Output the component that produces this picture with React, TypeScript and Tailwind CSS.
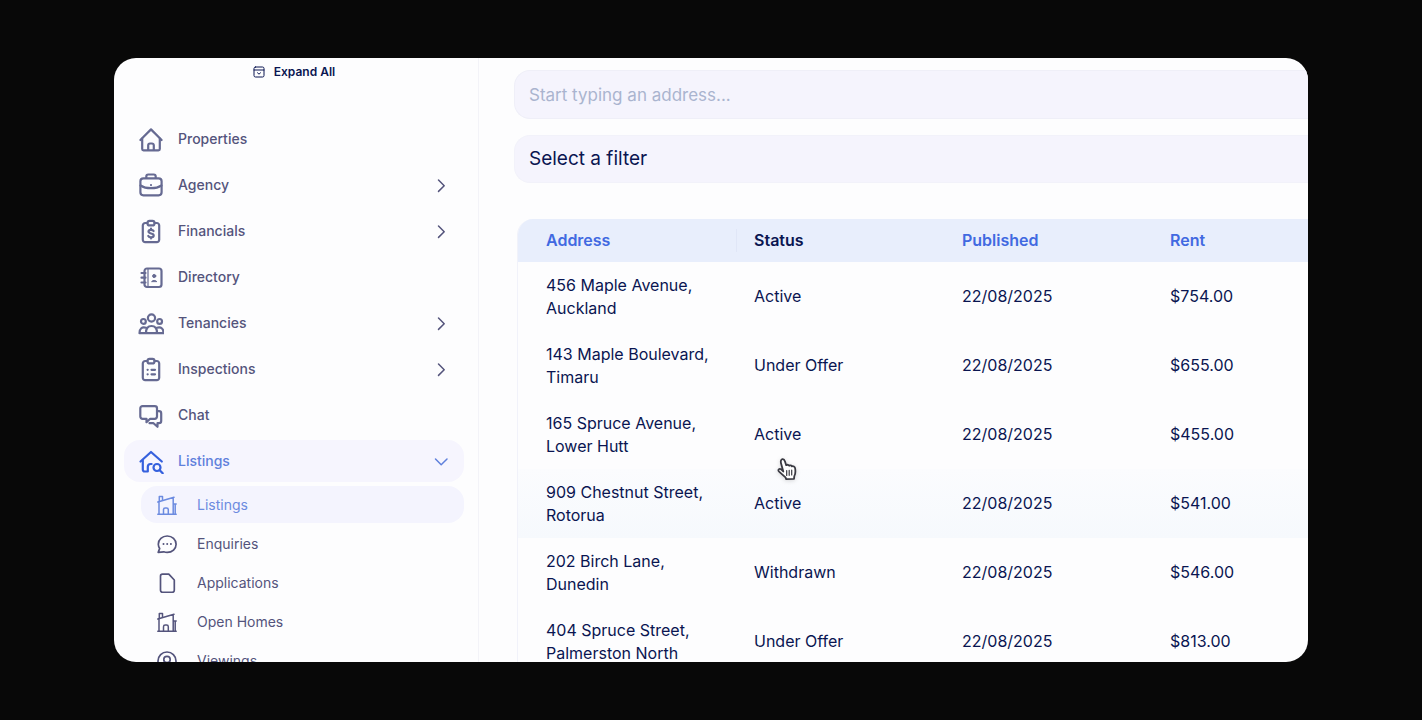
import React, { useState } from 'react';
import clsx from 'clsx';

interface IconProps {
  className?: string;
}

const Icon: React.FC<IconProps & { children: React.ReactNode }> = ({ className, children }) => (
  <svg
    viewBox="0 0 26 26"
    fill="none"
    stroke="currentColor"
    strokeWidth={2.2}
    strokeLinecap="round"
    strokeLinejoin="round"
    className={clsx('size-[26px] shrink-0', className)}
    aria-hidden="true"
  >
    {children}
  </svg>
);

const SmallIcon: React.FC<IconProps & { children: React.ReactNode }> = ({ className, children }) => (
  <svg
    viewBox="0 0 20 20"
    fill="none"
    stroke="currentColor"
    strokeWidth={1.7}
    strokeLinecap="round"
    strokeLinejoin="round"
    className={clsx('size-5 shrink-0', className)}
    aria-hidden="true"
  >
    {children}
  </svg>
);

const HomeIcon = () => (
  <Icon className="text-[#666a92]">
    <path d="M2.4 14 13 3.4 23.6 14" />
    <path d="M4.2 12.500v10.500a1.300 1.300 0 0 0 1.300 1.300h15a1.300 1.300 0 0 0 1.300-1.300V12.500" />
    <path d="M10.200 24v-4.700a1.800 1.800 0 0 1 1.800-1.800h2a1.800 1.800 0 0 1 1.800 1.800V24" />
  </Icon>
);

const BriefcaseIcon = () => (
  <Icon className="text-[#666a92]">
    <rect x="2.4" y="6.300" width="21.200" height="17" rx="3" />
    <path d="M8.300 6V4.500a2 2 0 0 1 2-2h5.400a2 2 0 0 1 2 2V6" />
    <path d="M2.500 13.500c5.500 3.600 15.500 3.600 21 0" />
    <path d="M13 13v.1" />
  </Icon>
);

const ClipboardFrame = () => (
  <>
    <path d="M9.500 5H7.200A2.400 2.400 0 0 0 4.800 7.400v14.400a2.400 2.400 0 0 0 2.400 2.400h11.600a2.400 2.400 0 0 0 2.400-2.400V7.400A2.400 2.400 0 0 0 18.800 5h-2.300" />
    <rect x="9.500" y="2.800" width="7" height="4.600" rx="2" />
  </>
);

const FinancialsIcon = () => (
  <Icon className="text-[#666a92]">
    <ClipboardFrame />
    <path d="M15.600 13c-.4-.8-1.300-1.200-2.600-1.200-1.500 0-2.500.7-2.500 1.800 0 2.700 5.200 1.100 5.200 3.800 0 1.200-1.100 1.900-2.700 1.900-1.400 0-2.300-.5-2.700-1.300M13 10.600v1M13 19.500v1" />
  </Icon>
);

const DirectoryIcon = () => (
  <Icon className="text-[#666a92]">
    <rect x="6.500" y="4.500" width="17" height="18.500" rx="2.500" />
    <path d="M10 5v17.500" strokeWidth={1.200} />
    <path d="M3.500 9h4M3.500 13.700h4M3.500 18.500h4" />
    <circle cx="16.200" cy="12" r="1.600" fill="currentColor" strokeWidth={1} />
    <path d="M13.800 17.300c.8-1.200 4-1.200 4.800 0z" fill="currentColor" strokeWidth={1} />
  </Icon>
);

const TenanciesIcon = () => (
  <Icon className="text-[#666a92]">
    <circle cx="13.500" cy="8" r="3.600" />
    <circle cx="5.400" cy="11.400" r="2.400" />
    <circle cx="21.600" cy="11.400" r="2.400" />
    <path d="M8 23c0-4.800 1.800-7 5.500-7s5.500 2.200 5.500 7" />
    <path d="M8 17.800c-4-1.200-6.500.6-6.500 5.400h24c0-4.800-2.500-6.600-6.500-5.400" />
  </Icon>
);

const InspectionsIcon = () => (
  <Icon className="text-[#666a92]">
    <ClipboardFrame />
    <path d="M9.600 13.800h.1M13.500 13.800H17M9.600 18.300h.1M13.500 18.300H17" />
  </Icon>
);

const ChatIcon = () => (
  <Icon className="text-[#666a92]">
    <path d="M4.500 4.200h12.300A2.200 2.200 0 0 1 19 6.400v8.200a2.200 2.200 0 0 1-2.200 2.200h-4.600l-3.700 3.400v-3.400h-4a2.200 2.200 0 0 1-2.200-2.200V6.400a2.200 2.200 0 0 1 2.200-2.200z" />
    <path d="M19.300 9.200H21a2.200 2.200 0 0 1 2.200 2.200V19a2.200 2.200 0 0 1-2.200 2.200h-1.500v3.600L15.500 21.200h-4" />
  </Icon>
);

const HouseSearchIcon = () => (
  <Icon className="text-[#3560dd]">
    <path d="M2.500 13.500 13 4l10.800 9.500" />
    <path d="M4.800 12.500v9a2 2 0 0 0 2 2h3v-4.700a2.800 2.800 0 0 1 2.800-2.800h1" />
    <circle cx="19" cy="19.500" r="3.500" />
    <path d="m21.700 22.300 3 3" />
  </Icon>
);

const BuildingIcon = () => (
  <SmallIcon>
    <g strokeWidth={1.500}>
      <path d="M.8 19.200h18.400M2 19V6.800M.8 7 17 2.200M16.200 2.500V19M16.200 9h3M18.200 9v10" />
      <path d="M2.300 6.300V1.500h3.200v3.800" />
      <path d="M6.500 19v-4.300A1.700 1.700 0 0 1 8.200 13h1.400a1.700 1.700 0 0 1 1.700 1.700V19" />
    </g>
  </SmallIcon>
);

const EnquiriesIcon = () => (
  <SmallIcon>
    <path d="M10.200 2c5 0 8.900 3.500 8.900 8.200s-3.900 8.200-8.900 8.200c-1.200 0-2.400-.2-3.400-.6l-5.600.6 1.500-4a7.600 7.600 0 0 1-1.400-4.200C1.300 5.500 5.200 2 10.200 2z" />
    <path d="M6.500 10h.01M10.200 10h.01M13.900 10h.01" strokeWidth={2} />
  </SmallIcon>
);

const FileIcon = () => (
  <SmallIcon>
    <path d="M5.500 1.200h6.300L17.300 7v10.300a2 2 0 0 1-2 2H5.500a2 2 0 0 1-2-2V3.200a2 2 0 0 1 2-2z" />
  </SmallIcon>
);

const ViewingsIcon = () => (
  <SmallIcon>
    <circle cx="10" cy="10" r="9" />
    <circle cx="10" cy="8.500" r="3.200" />
    <path d="M4.500 16.800c.8-3 2.800-4 5.500-4s4.700 1 5.500 4" />
  </SmallIcon>
);

const Chevron: React.FC<{ open: boolean }> = ({ open }) => (
  <svg
    viewBox="0 0 16 16"
    fill="none"
    stroke="currentColor"
    strokeWidth={1.500}
    strokeLinecap="round"
    strokeLinejoin="round"
    className="ml-auto size-4 shrink-0"
    aria-hidden="true"
  >
    <path d={open ? 'm2.500 6 5.700 5.700L14 6' : 'm5.500 3 5.700 5.700-5.700 5.700'} />
  </svg>
);

const navItems = [
  { label: 'Properties', icon: HomeIcon, expandable: false },
  { label: 'Agency', icon: BriefcaseIcon, expandable: true },
  { label: 'Financials', icon: FinancialsIcon, expandable: true },
  { label: 'Directory', icon: DirectoryIcon, expandable: false },
  { label: 'Tenancies', icon: TenanciesIcon, expandable: true },
  { label: 'Inspections', icon: InspectionsIcon, expandable: true },
  { label: 'Chat', icon: ChatIcon, expandable: false },
];

const listingItems = [
  { label: 'Listings', icon: BuildingIcon },
  { label: 'Enquiries', icon: EnquiriesIcon },
  { label: 'Applications', icon: FileIcon },
  { label: 'Open Homes', icon: BuildingIcon },
  { label: 'Viewings', icon: ViewingsIcon },
];

const listings = [
  { street: '456 Maple Avenue,', city: 'Auckland', status: 'Active', published: '22/08/2025', rent: '$754.00' },
  { street: '143 Maple Boulevard,', city: 'Timaru', status: 'Under Offer', published: '22/08/2025', rent: '$655.00' },
  { street: '165 Spruce Avenue,', city: 'Lower Hutt', status: 'Active', published: '22/08/2025', rent: '$455.00' },
  { street: '909 Chestnut Street,', city: 'Rotorua', status: 'Active', published: '22/08/2025', rent: '$541.00' },
  { street: '202 Birch Lane,', city: 'Dunedin', status: 'Withdrawn', published: '22/08/2025', rent: '$546.00' },
  { street: '404 Spruce Street,', city: 'Palmerston North', status: 'Under Offer', published: '22/08/2025', rent: '$813.00' },
];

const columns = ['Address', 'Status', 'Published', 'Rent'];

const Sidebar: React.FC = () => {
  const [open, setOpen] = useState(true);
  const rowClass = 'flex h-[42px] w-full shrink-0 items-center gap-[14px] rounded-2xl pl-[14px] pr-[15px] text-left';

  return (
    <aside className="flex w-[365px] shrink-0 flex-col border-r border-[#f3f3f8] pl-[10px] pr-[14px] text-sm font-medium text-[#54547c]">
      <button className="mx-auto flex h-7 shrink-0 items-center gap-[9px] text-xs font-semibold text-[#0a1551]">
        <svg viewBox="0 0 12 12" fill="none" stroke="currentColor" strokeLinecap="round" className="size-3" aria-hidden="true">
          <rect x="1" y="1" width="10" height="10" rx="1.500" />
          <path d="M1 4h10M4.500 6.800 6 8.200l1.500-1.400" />
        </svg>
        Expand All
      </button>

      <nav className="mt-8 flex flex-col gap-1">
        {navItems.map(({ label, icon: ItemIcon, expandable }) =>
          expandable ? (
            <button key={label} className={rowClass}>
              <ItemIcon />
              <span>{label}</span>
              <Chevron open={false} />
            </button>
          ) : (
            <a key={label} href="#" className={rowClass}>
              <ItemIcon />
              <span>{label}</span>
            </a>
          )
        )}

        <button
          onClick={() => setOpen(!open)}
          aria-expanded={open}
          className={clsx(rowClass, 'bg-[#f6f5fe] text-[#5f80dc]')}
        >
          <HouseSearchIcon />
          <span>Listings</span>
          <Chevron open={open} />
        </button>

        {open && (
          <div className="flex flex-col gap-[2px] pl-[17px] font-normal">
            {listingItems.map(({ label, icon: ItemIcon }, index) => (
              <a
                key={label}
                href="#"
                className={clsx(
                  'flex h-[37px] shrink-0 items-center gap-5 rounded-2xl pl-4',
                  index === 0 && 'bg-[#f4f4fe] text-[#6c8be0]'
                )}
              >
                <ItemIcon />
                <span>{label}</span>
              </a>
            ))}
          </div>
        )}
      </nav>
    </aside>
  );
};

const ListingsTable: React.FC = () => (
  <div className="ml-[3px] mt-9 overflow-hidden rounded-tl-2xl border-l border-[#f1f2fa]">
    <table className="w-full table-fixed text-left text-base leading-[23px] text-[#0a1551]">
      <thead>
        <tr className="h-[43px] bg-[#e8eefc]">
          {columns.map((column) => (
            <th key={column} className="w-[208px] p-0 last:w-auto">
              <button
                className={clsx(
                  'block w-full pl-7 text-left font-semibold',
                  column === 'Status'
                    ? 'bg-[linear-gradient(#e0e6f7,#e0e6f7)] bg-[length:1px_100%] bg-[position:10px_0] bg-no-repeat text-[#0a1551]'
                    : 'text-[#4169e1]'
                )}
              >
                {column}
              </button>
            </th>
          ))}
        </tr>
      </thead>
      <tbody>
        {listings.map((listing, index) => (
          <tr key={listing.street} className={clsx('h-[69px]', index === 3 && 'bg-linear-to-b from-[#fbfcfe] to-[#f6f9fd]')}>
            <td className="p-0 pl-7">
              {listing.street}
              <br />
              {listing.city}
            </td>
            <td className="p-0 pl-7">{listing.status}</td>
            <td className="p-0 pl-7">{listing.published}</td>
            <td className="p-0 pl-7">{listing.rent}</td>
          </tr>
        ))}
      </tbody>
    </table>
  </div>
);

const HandCursor: React.FC<IconProps> = ({ className }) => (
  <svg viewBox="0 0 20 24" className={className} aria-hidden="true">
    <path
      d="M6.300 14.500 4 6.200C3.500 4.300 4 2.400 5.400 2.100c1.300-.3 2.100.7 2.600 2.300l1.200 3.800c1-.8 2.500-.5 3 .5 1-.6 2.300-.3 2.700.6 1.500-.4 2.900.2 3.200 1.900.5 3 .8 5.200-.8 7.900l-.3 2.700-7.800.4-.7-1.800c-2-1.700-4.300-3.800-6.400-5.700-1.300-1.300-.7-3.100 1-2.900 1.100.1 2.100 1.300 3.200 2.700z"
      fill="white"
      stroke="#3a3a42"
      strokeWidth={1.800}
      strokeLinejoin="round"
    />
    <path d="M9.700 13.500v5M12.200 13.300v5M14.700 13v5" stroke="#3a3a42" strokeWidth={1.200} strokeLinecap="round" />
  </svg>
);

const App: React.FC = () => {
  const [address, setAddress] = useState('');

  return (
    <div className="h-screen bg-[#080808] px-[114px] py-[58px] font-['Inter',sans-serif]">
      <div className="relative flex h-full overflow-hidden rounded-[22px] bg-[#fdfdfe]">
        <Sidebar />

        <main className="min-w-0 flex-1 pl-[35px] pt-3">
          <input
            type="text"
            aria-label="Address"
            value={address}
            onChange={(e) => setAddress(e.target.value)}
            placeholder="Start typing an address..."
            className="block h-[49px] w-full rounded-l-2xl border border-r-0 border-[#efeff8] bg-[#f5f4fd] px-[14px] text-[17px] text-[#0a1551] outline-none placeholder:text-[#aab4cf]"
          />
          <select
            aria-label="Filter"
            className="mt-4 block h-12 w-full appearance-none rounded-l-2xl border border-r-0 border-[#f2f2fa] bg-[#f5f4fd] px-[14px] text-[19px] text-[#0a1551] outline-none"
          >
            <option>Select a filter</option>
          </select>
          <ListingsTable />
        </main>

        <HandCursor className="absolute left-[663px] top-[399px] h-6 w-5 drop-shadow-sm" />
      </div>
    </div>
  );
};

export default App;
